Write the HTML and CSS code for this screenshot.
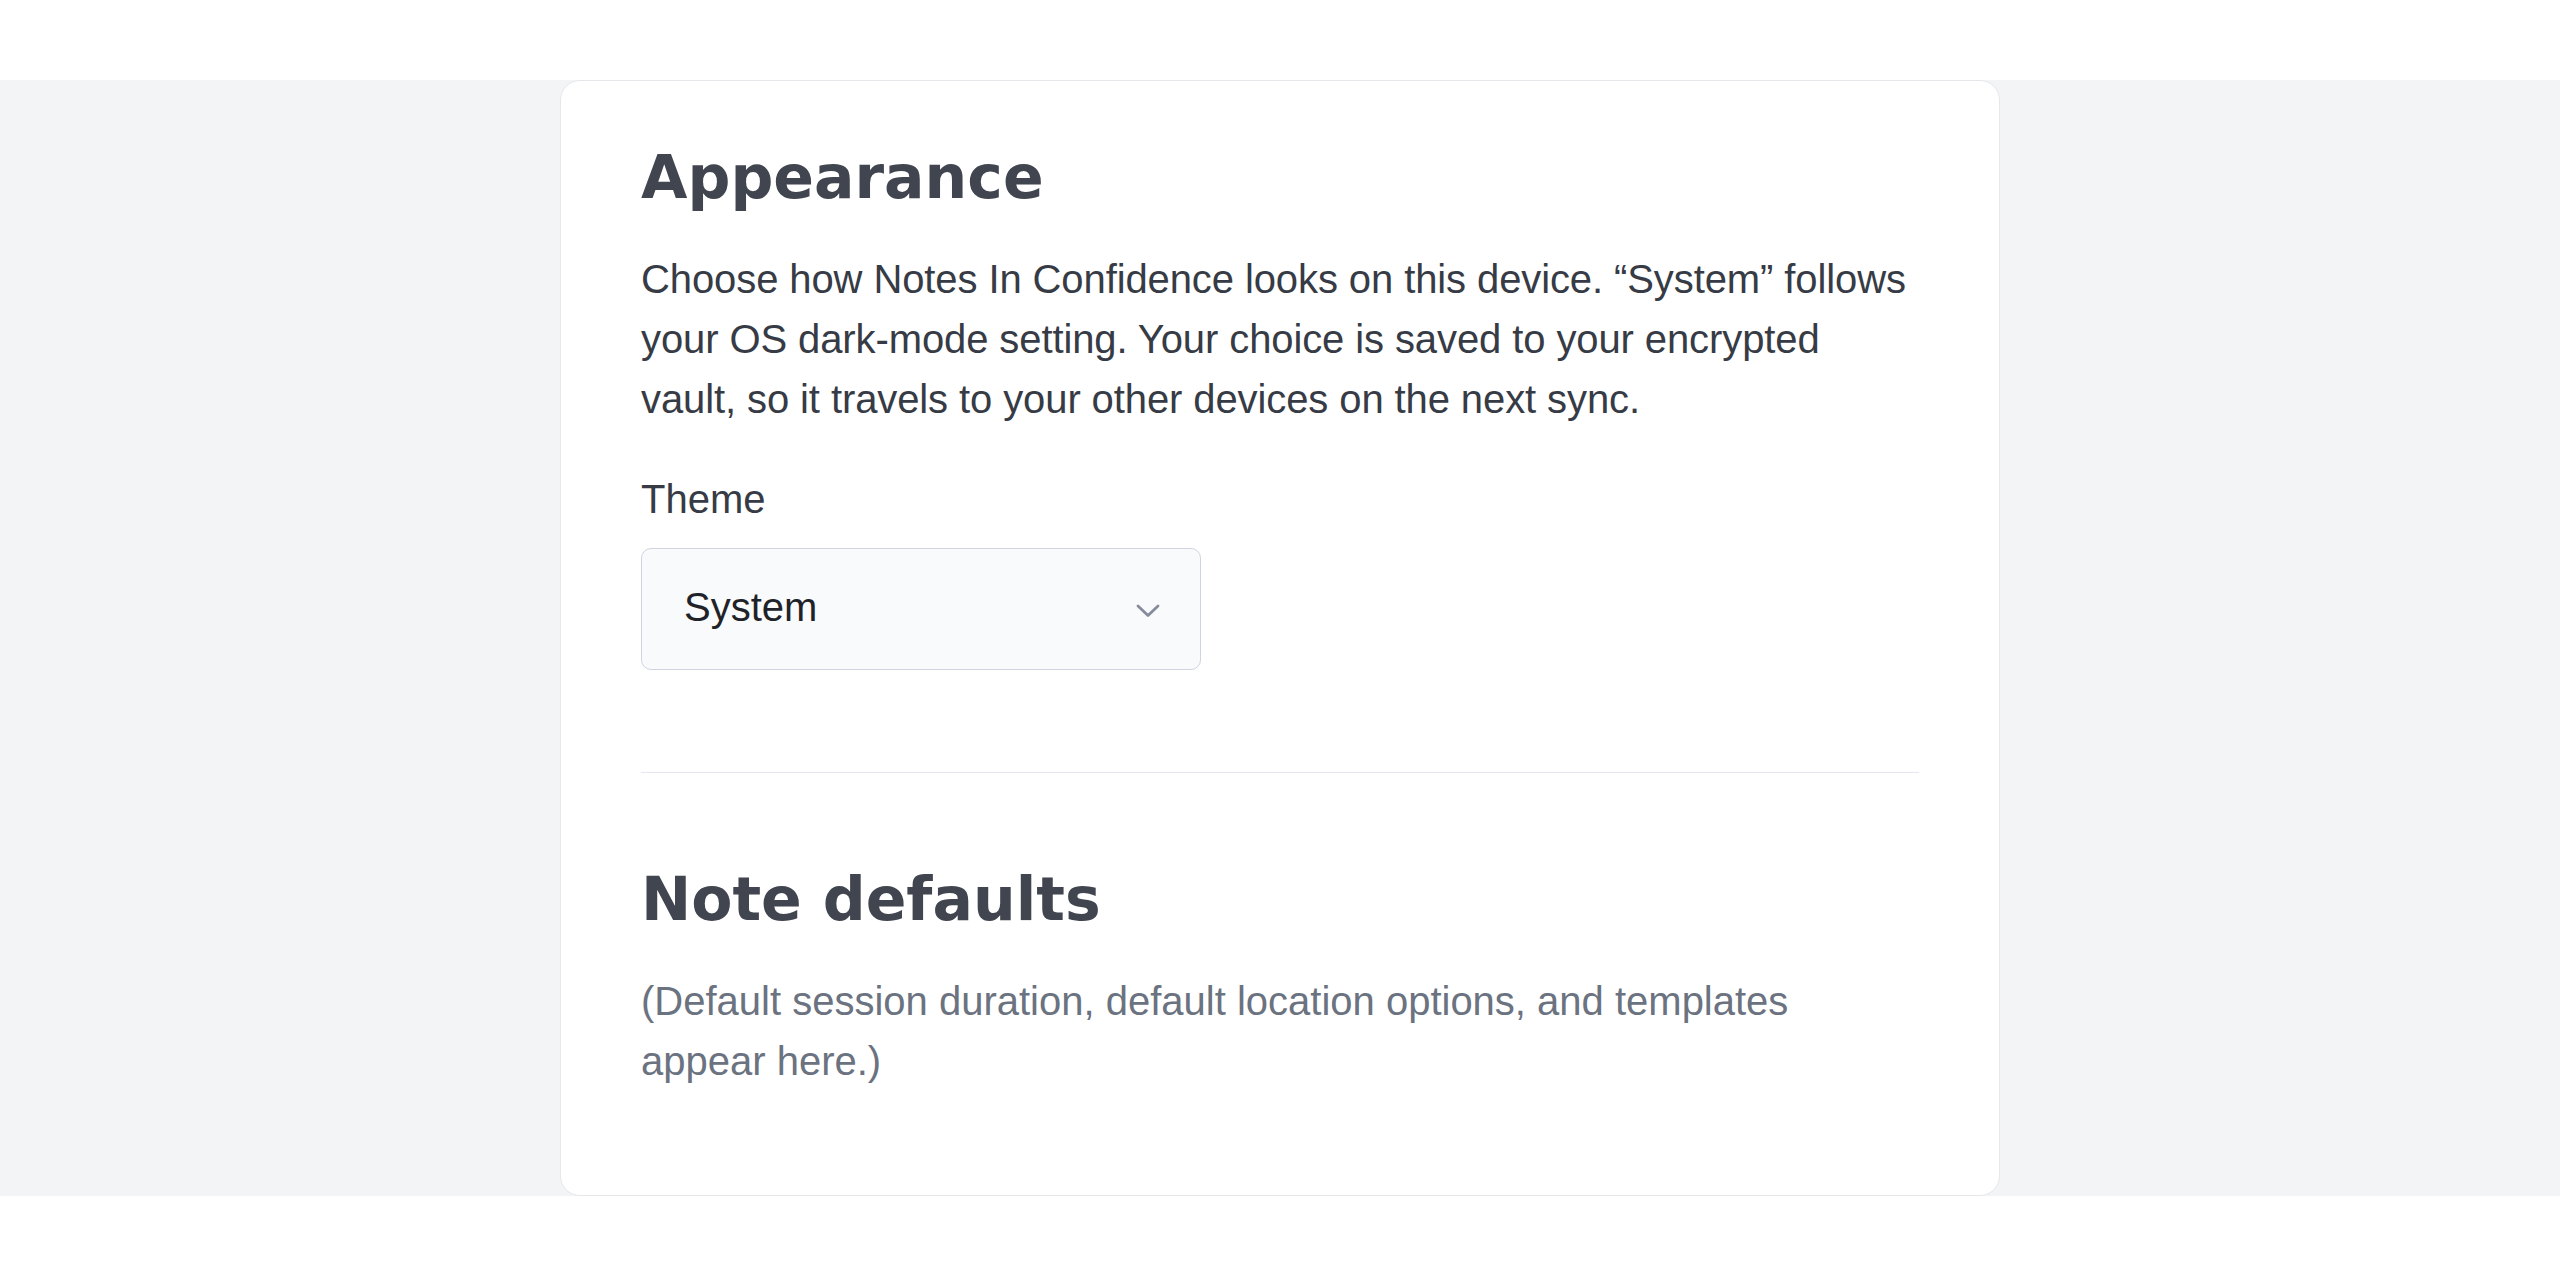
FILE: index.html
```html
<!DOCTYPE html>
<html lang="en">
<head>
    <meta charset="UTF-8">
    <meta name="viewport" content="width=device-width, initial-scale=1.0">
    <title>Settings · Notes In Confidence</title>
    <link rel="stylesheet" href="styles.css">
</head>
<body>
    <header class="top-bar"></header>
    <main class="main">
        <div class="card">
            <section class="section">
                <h2>Appearance</h2>
                <p class="desc">Choose how Notes In Confidence looks on this device. “System” follows your OS dark-mode setting. Your choice is saved to your encrypted vault, so it travels to your other devices on the next sync.</p>
                <label class="field-label" for="theme-select">Theme</label>
                <div class="select" id="theme-select" role="button" tabindex="0">
                    <span class="select-value">System</span>
                    <svg class="chevron" width="24" height="14" viewBox="0 0 24 14" aria-hidden="true">
                        <polyline points="2,2 12,11.5 22,2" fill="none" stroke="currentColor" stroke-width="2.8" stroke-linecap="round" stroke-linejoin="round"/>
                    </svg>
                </div>
            </section>
            <section class="section">
                <h2>Note defaults</h2>
                <p class="desc muted">(Default session duration, default location options, and templates appear here.)</p>
            </section>
        </div>
    </main>
</body>
</html>
```

FILE: styles.css
```css
/* base */
body {
    margin: 0;
    background-color: #fff;
    font-family: "Liberation Sans", Arial, sans-serif;
    color: #363b45;
}

.top-bar {
    height: 80px;
}

.main {
    background-color: #f3f4f6;
    display: flex;
    justify-content: center;
}

.card {
    box-sizing: border-box;
    width: 1440px;
    background-color: #fff;
    border: 1px solid #e5e7eb;
    border-radius: 20px;
    padding: 60px 80px 0;
}

.section {
    padding-bottom: 102px;
}

.section:last-child {
    padding-bottom: 104px;
}

.section + .section {
    border-top: 1px solid #e5e8ee;
    padding-top: 90px;
}

h2 {
    margin: 0 0 36px;
    font-family: "DejaVu Sans", sans-serif;
    font-weight: bold;
    font-size: 60px;
    line-height: 72px;
    color: #41454f;
}

.desc {
    margin: 0;
    font-size: 40px;
    line-height: 60px;
    letter-spacing: -0.1px;
}

.muted {
    color: #6b7280;
    letter-spacing: 0;
}

.field-label {
    display: block;
    margin-top: 40px;
    margin-bottom: 19px;
    font-size: 40px;
    line-height: 60px;
}

/* select */
.select {
    box-sizing: border-box;
    width: 560px;
    height: 122px;
    display: flex;
    align-items: center;
    justify-content: space-between;
    padding: 0 40px 4px 42px;
    background-color: #f9fafb;
    border: 1px solid #cfd4e0;
    border-radius: 10px;
    cursor: pointer;
}

.select-value {
    font-size: 40px;
    line-height: 60px;
    color: #1f2329;
}

.chevron {
    color: #868c9c;
    margin-top: 8px;
}
```
